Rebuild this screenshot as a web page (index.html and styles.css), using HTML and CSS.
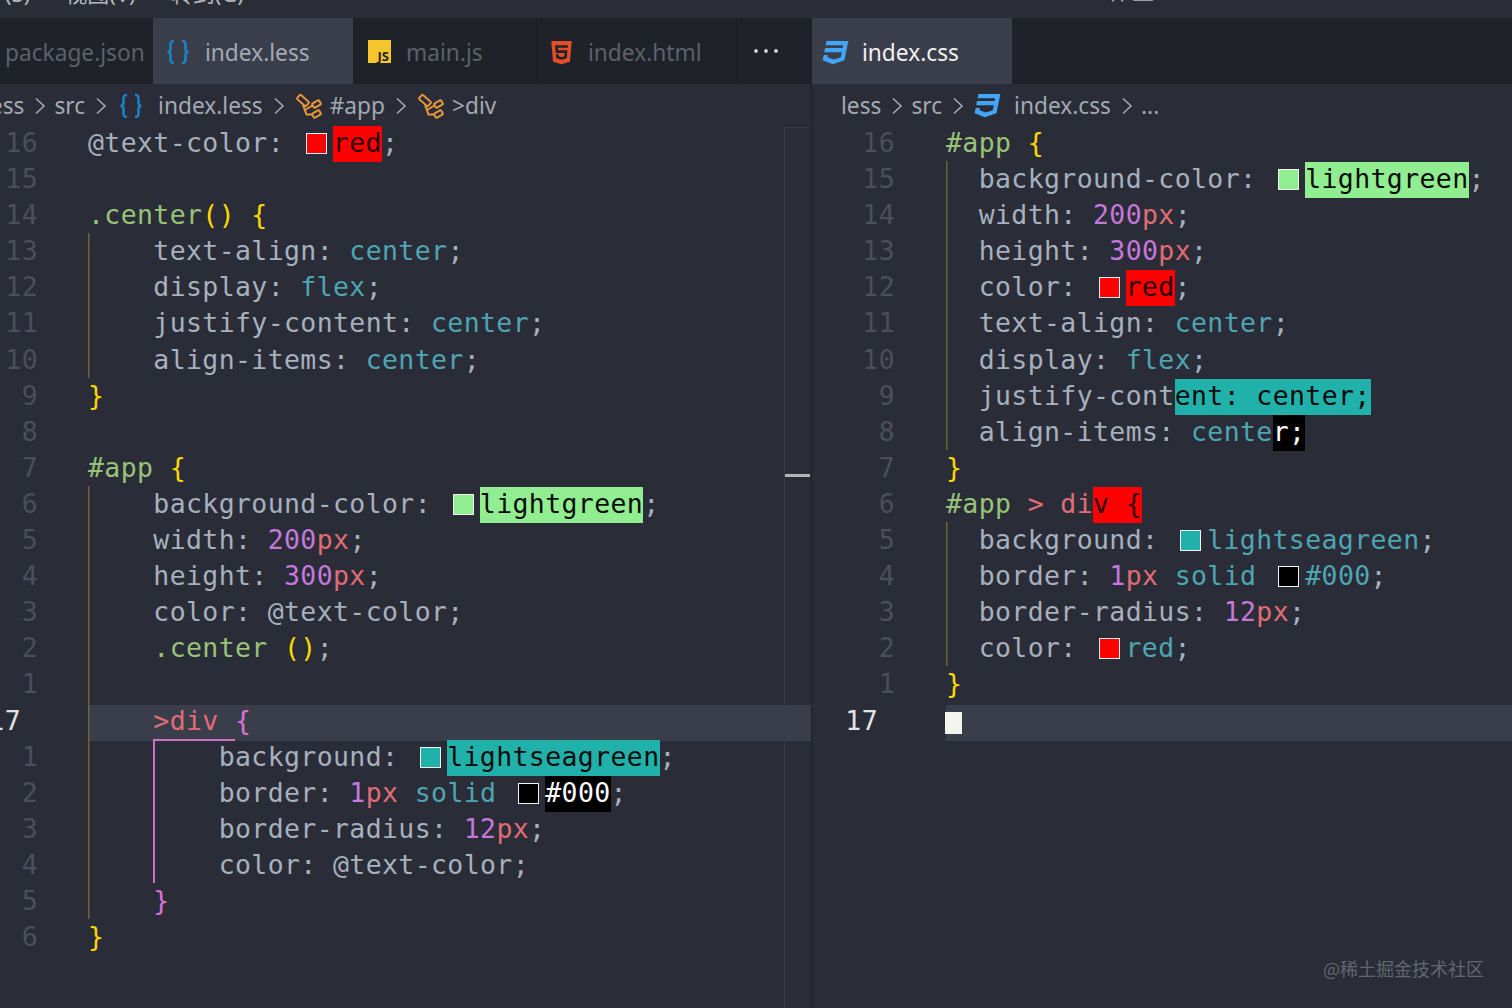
FILE: index.html
```html
<!DOCTYPE html>
<html>
<head>
    <title>index.less - index.css</title>
    <link rel="stylesheet" href="styles.css">
</head>
<body>

<svg class="defs" width="0" height="0">
    <symbol id="i-braces" viewBox="0 0 24 26">
        <path d="M8 2C4 2 4.5 5 4.5 8V10C4.5 12 3.5 13 1.5 13C3.5 13 4.5 14 4.5 16V18C4.5 21 4 24 8 24M16 2C20 2 19.5 5 19.5 8V10C19.5 12 20.5 13 22.5 13C20.5 13 19.5 14 19.5 16V18C19.5 21 20 24 16 24" fill="none" stroke="#1b80c4" stroke-width="2.6"/>
    </symbol>
    <symbol id="i-css" viewBox="0 0 24 24">
        <path d="M5,3L4.35,6.34H17.94L17.5,8.5H3.92L3.26,11.83H16.85L16.09,15.64L10.61,17.45L5.86,15.64L6.19,14H2.85L2.06,18L9.91,21L18.96,18L20.16,11.97L20.4,10.76L21.94,3H5Z" fill="#42a5f5"/>
    </symbol>
    <symbol id="i-html" viewBox="0 0 24 24">
        <path d="M12,17.56L16.07,16.43L16.62,10.33H9.38L9.2,8.3H16.8L17,6.31H7L7.56,12.32H14.45L14.22,14.9L12,15.5L9.78,14.9L9.64,13.24H7.64L7.93,16.43L12,17.56M4.07,3H19.93L18.5,19.2L12,21L5.5,19.2L4.07,3Z" fill="#e44d26"/>
    </symbol>
    <symbol id="i-node" viewBox="0 0 26 26">
        <g fill="none" stroke="#e8963c" stroke-width="2">
            <rect x="1" y="4.7" width="12" height="5.6" rx="1.2" transform="rotate(42 7 7.5)"/>
            <rect x="16.5" y="8.6" width="8" height="4.8" rx="1" transform="rotate(-30 20.5 11)"/>
            <rect x="16.5" y="18.6" width="8" height="4.8" rx="1" transform="rotate(-30 20.5 21)"/>
            <path d="M7 12L10.5 21.5H16.5M9 17L16.5 12.5"/>
        </g>
    </symbol>
    <symbol id="i-chev" viewBox="0 0 12 18">
        <path d="M2 1.5L10 9L2 16.5" fill="none" stroke="#a3a9b4" stroke-width="1.6"/>
    </symbol>
</svg>

<div class="titlebar">
    <span class="menu first">(S)</span>
    <span class="menu">视图(V)</span>
    <span class="menu">转到(G)</span>
    <span class="title">工作区</span>
</div>

<div class="panes">

    <!-- left editor: index.less -->
    <div class="pane pane-left">
        <div class="tabs">
            <div class="tab tab-package"><span>package.json</span></div>
            <div class="tab tab-active tab-less"><svg class="icon-braces"><use href="#i-braces"/></svg><span>index.less</span></div>
            <div class="tab tab-main"><span class="js-icon">JS</span><span>main.js</span></div>
            <div class="tab tab-html"><svg class="icon-html"><use href="#i-html"/></svg><span>index.html</span></div>
            <div class="tab tab-more">
                <svg width="24" height="6"><circle cx="2" cy="3" r="1.9"/><circle cx="12" cy="3" r="1.9"/><circle cx="22" cy="3" r="1.9"/></svg>
            </div>
        </div>
        <div class="crumbs crumbs-left">
            <span>less</span><svg class="chev"><use href="#i-chev"/></svg>
            <span>src</span><svg class="chev"><use href="#i-chev"/></svg>
            <svg class="icon-braces"><use href="#i-braces"/></svg><span>index.less</span><svg class="chev"><use href="#i-chev"/></svg>
            <svg class="icon-node"><use href="#i-node"/></svg><span>#app</span><svg class="chev"><use href="#i-chev"/></svg>
            <svg class="icon-node"><use href="#i-node"/></svg><span>&gt;div</span>
        </div>
        <div class="ruler"><div class="ruler-mark"></div></div>
        <div class="code-area">
            <div class="line"><span class="ln">16</span><span class="code">@text-color: <i class="swatch sw-red"></i><span class="hl hl-red">red</span>;</span></div>
            <div class="line"><span class="ln">15</span><span class="code"></span></div>
            <div class="line"><span class="ln">14</span><span class="code"><span class="sel">.center</span><span class="br">()</span> <span class="br">{</span></span></div>
            <div class="line"><span class="ln">13</span><span class="code g1">    text-align: <span class="val">center</span>;</span></div>
            <div class="line"><span class="ln">12</span><span class="code g1">    display: <span class="val">flex</span>;</span></div>
            <div class="line"><span class="ln">11</span><span class="code g1">    justify-content: <span class="val">center</span>;</span></div>
            <div class="line"><span class="ln">10</span><span class="code g1">    align-items: <span class="val">center</span>;</span></div>
            <div class="line"><span class="ln">9</span><span class="code"><span class="br">}</span></span></div>
            <div class="line"><span class="ln">8</span><span class="code"></span></div>
            <div class="line"><span class="ln">7</span><span class="code"><span class="sel">#app</span> <span class="br">{</span></span></div>
            <div class="line"><span class="ln">6</span><span class="code g1">    background-color: <i class="swatch sw-green"></i><span class="hl hl-green">lightgreen</span>;</span></div>
            <div class="line"><span class="ln">5</span><span class="code g1">    width: <span class="num">200</span><span class="unit">px</span>;</span></div>
            <div class="line"><span class="ln">4</span><span class="code g1">    height: <span class="num">300</span><span class="unit">px</span>;</span></div>
            <div class="line"><span class="ln">3</span><span class="code g1">    color: @text-color;</span></div>
            <div class="line"><span class="ln">2</span><span class="code g1">    <span class="sel">.center</span> <span class="br">()</span>;</span></div>
            <div class="line"><span class="ln">1</span><span class="code g1"></span></div>
            <div class="line line-cur"><span class="ln">17</span><span class="code g1">    <span class="bracket-top"><span class="unit">&gt;div</span> </span><span class="pk">{</span></span></div>
            <div class="line"><span class="ln">1</span><span class="code g12">        background: <i class="swatch sw-teal"></i><span class="hl hl-teal">lightseagreen</span>;</span></div>
            <div class="line"><span class="ln">2</span><span class="code g12">        border: <span class="num">1</span><span class="unit">px</span> <span class="val">solid</span> <i class="swatch sw-black"></i><span class="hl hl-black">#000</span>;</span></div>
            <div class="line"><span class="ln">3</span><span class="code g12">        border-radius: <span class="num">12</span><span class="unit">px</span>;</span></div>
            <div class="line"><span class="ln">4</span><span class="code g12">        color: @text-color;</span></div>
            <div class="line"><span class="ln">5</span><span class="code g1">    <span class="pk">}</span></span></div>
            <div class="line"><span class="ln">6</span><span class="code"><span class="br">}</span></span></div>
        </div>
    </div>

    <!-- right editor: compiled index.css -->
    <div class="pane pane-right">
        <div class="tabs">
            <div class="tab tab-active tab-css"><svg class="icon-css"><use href="#i-css"/></svg><span>index.css</span></div>
        </div>
        <div class="crumbs crumbs-right">
            <span>less</span><svg class="chev"><use href="#i-chev"/></svg>
            <span>src</span><svg class="chev"><use href="#i-chev"/></svg>
            <svg class="icon-css"><use href="#i-css"/></svg><span>index.css</span><svg class="chev"><use href="#i-chev"/></svg>
            <span>...</span>
        </div>
        <div class="code-area">
            <div class="line"><span class="ln">16</span><span class="code"><span class="sel">#app</span> <span class="br">{</span></span></div>
            <div class="line"><span class="ln">15</span><span class="code g1">  background-color: <i class="swatch sw-green"></i><span class="hl hl-green">lightgreen</span>;</span></div>
            <div class="line"><span class="ln">14</span><span class="code g1">  width: <span class="num">200</span><span class="unit">px</span>;</span></div>
            <div class="line"><span class="ln">13</span><span class="code g1">  height: <span class="num">300</span><span class="unit">px</span>;</span></div>
            <div class="line"><span class="ln">12</span><span class="code g1">  color: <i class="swatch sw-red"></i><span class="hl hl-red">red</span>;</span></div>
            <div class="line"><span class="ln">11</span><span class="code g1">  text-align: <span class="val">center</span>;</span></div>
            <div class="line"><span class="ln">10</span><span class="code g1">  display: <span class="val">flex</span>;</span></div>
            <div class="line"><span class="ln">9</span><span class="code g1">  justify-cont<span class="hl hl-teal">ent: center;</span></span></div>
            <div class="line"><span class="ln">8</span><span class="code g1">  align-items: <span class="val">cente</span><span class="hl hl-black">r;</span></span></div>
            <div class="line"><span class="ln">7</span><span class="code"><span class="br">}</span></span></div>
            <div class="line"><span class="ln">6</span><span class="code"><span class="sel">#app</span> <span class="unit">&gt; di</span><span class="hl hl-red">v {</span></span></div>
            <div class="line"><span class="ln">5</span><span class="code g1">  background: <i class="swatch sw-teal"></i><span class="val">lightseagreen</span>;</span></div>
            <div class="line"><span class="ln">4</span><span class="code g1">  border: <span class="num">1</span><span class="unit">px</span> <span class="val">solid</span> <i class="swatch sw-black"></i><span class="val">#000</span>;</span></div>
            <div class="line"><span class="ln">3</span><span class="code g1">  border-radius: <span class="num">12</span><span class="unit">px</span>;</span></div>
            <div class="line"><span class="ln">2</span><span class="code g1">  color: <i class="swatch sw-red"></i><span class="val">red</span>;</span></div>
            <div class="line"><span class="ln">1</span><span class="code"><span class="br">}</span></span></div>
            <div class="line line-cur"><span class="ln">17</span><span class="code"><i class="cursor"></i></span></div>
        </div>
    </div>

</div>

<div class="watermark">@稀土掘金技术社区</div>

</body>
</html>
```

FILE: styles.css
```css
html, body {
    margin: 0;
    padding: 0;
    height: 1008px;
    overflow: hidden;
    background-color: #2a2d37;
}

body {
    position: relative;
    font-family: "Noto Sans", "Noto Sans CJK SC", sans-serif;
    color: #a3a9b4;
}

.defs {
    display: block;
}

/* top bar, only the bottom of its text is in the picture */
.titlebar {
    display: flex;
    height: 18px;
    overflow: hidden;
    background-color: #2a2d36;
    font-size: 22px;
    line-height: 22px;
    color: #b4b8bf;
}

.menu {
    margin-top: -18px;
    margin-right: 35px;
}

.menu.first {
    margin-left: 5px;
}

.title {
    margin-top: -21px;
    margin-left: 806px;
    font-size: 23px;
    line-height: 23px;
}

.panes {
    display: flex;
    height: 990px;
}

.pane {
    position: relative;
    overflow: hidden;
}

.pane-left {
    width: 811px;
    flex: none;
    border-right: 1px solid #1d2026;
}

.pane-right {
    flex: 1;
}

/* tabs */
.tabs {
    display: flex;
    height: 66px;
    background-color: #1f2228;
}

.tab {
    display: flex;
    align-items: center;
    flex: none;
    gap: 15px;
    box-sizing: border-box;
    padding-top: 2px;
    font-size: 22.7px;
    color: #5c616b;
    border-right: 1px solid #1a1c21;
}

.tab-active {
    background-color: #3a3e4a;
    color: #a3a9b4;
    border-right: none;
}

.tab-package {
    width: 153px;
    padding-left: 5px;
    border-right: none;
}

.tab-less {
    width: 200px;
    padding-left: 13px;
}

.tab-main {
    width: 184px;
    padding-left: 15px;
}

.tab-html {
    width: 200px;
    padding-left: 9px;
    gap: 11px;
}

.tab-more {
    width: 74px;
    padding-left: 17px;
    padding-top: 0;
    border-right: none;
}

.tab-more circle {
    fill: #d4d6da;
}

.tab-css {
    width: 200px;
    padding-left: 8px;
    gap: 11px;
    color: #f0f1f3;
}

.icon-braces {
    width: 24px;
    height: 26px;
    flex: none;
}

.icon-html {
    width: 31px;
    height: 31px;
    flex: none;
}

.icon-css {
    width: 31px;
    height: 31px;
    flex: none;
}

.icon-node {
    width: 26px;
    height: 26px;
    flex: none;
}

.js-icon {
    display: flex;
    align-items: flex-end;
    justify-content: flex-end;
    width: 23px;
    height: 23px;
    box-sizing: border-box;
    margin-top: -2px;
    padding: 0 2px 0 0;
    background-color: #f5c52b;
    color: #26231a;
    font-size: 13px;
    line-height: 14px;
    font-weight: 700;
}

/* breadcrumbs */
.crumbs {
    display: flex;
    align-items: center;
    box-sizing: border-box;
    height: 41px;
    padding-top: 2px;
    white-space: nowrap;
    font-size: 22.7px;
    color: #a3a9b4;
}

.crumbs-left {
    margin-left: -16px;
}

.crumbs-right {
    margin-left: 29px;
}

.chev {
    flex: none;
    width: 12px;
    height: 18px;
    margin: 0 8px 0 10px;
}

.crumbs .icon-braces {
    margin: 0 15px 0 4px;
}

.crumbs .icon-node {
    margin: 0 8px 0 3px;
}

.crumbs .icon-css {
    margin: 0 11px 0 0;
}

/* code */
.code-area {
    font-family: "DejaVu Sans Mono", monospace;
    font-size: 26.5px;
    letter-spacing: 0.38px;
    color: #a7b0be;
}

.line {
    display: flex;
    height: 36.1px;
    line-height: 36.1px;
}

.ln {
    display: flex;
    justify-content: flex-end;
    flex: none;
    box-sizing: border-box;
    color: #4a4f5b;
}

.pane-left .ln {
    width: 88px;
    padding-right: 50px;
}

.pane-right .ln {
    width: 134px;
    padding-right: 51px;
}

.line-cur .ln {
    color: #e2e3e5;
}

.pane-left .line-cur .ln {
    padding-right: 67px;
}

.pane-right .line-cur .ln {
    padding-right: 68px;
}

.code {
    flex: 1;
    white-space: pre;
    background-repeat: no-repeat;
}

/* the band sits 2px lower than the text line */
.line-cur .code {
    background-image: linear-gradient(transparent 2px, #3a3e4a 2px);
    box-shadow: 0 2px 0 #3a3e4a;
}

.g1 {
    background-image: linear-gradient(#6e6433, #6e6433);
    background-size: 1.5px 100%;
    background-position: 0 0;
}

.line-cur .code.g1 {
    background-image: linear-gradient(#6e6433, #6e6433), linear-gradient(transparent 2px, #3a3e4a 2px);
    background-size: 1.5px 100%, 100% 100%;
}

.g12 {
    background-image: linear-gradient(#6e6433, #6e6433), linear-gradient(#d070c8, #d070c8);
    background-size: 1.5px 100%, 2px 100%;
    background-position: 0 0, 65px 0;
}

.bracket-top {
    display: inline-block;
    height: 38.1px;
    box-sizing: border-box;
    border-bottom: 2px solid #d070c8;
}

.sel { color: #98c379; }
.val { color: #4ea5b3; }
.num { color: #c678dd; }
.unit { color: #e06c75; }
.br { color: #ffd700; }
.pk { color: #da70d6; }

/* shorter line-height plus bottom padding puts the box 1.5px below the text line */
.hl {
    display: inline-block;
    line-height: 33px;
    padding-bottom: 3px;
    color: #0a0a0a;
}

.hl-red { background-color: #ff0000; color: #2a0000; }
.hl-green { background-color: #90ee90; }
.hl-teal { background-color: #20b2aa; }
.hl-black { background-color: #000; color: #fff; }

.swatch {
    display: inline-block;
    box-sizing: border-box;
    width: 21px;
    height: 21px;
    margin: 0 6px 0 5.5px;
    border: 1.5px solid #f2f2f2;
    vertical-align: -2px;
}

.sw-red { background-color: #ff0000; }
.sw-green { background-color: #90ee90; }
.sw-teal { background-color: #20b2aa; }
.sw-black { background-color: #000; }

.cursor {
    display: inline-block;
    width: 17px;
    height: 22px;
    margin-left: -1px;
    background-color: #f4f4ee;
    vertical-align: -4px;
}

/* overview ruler at the right of the left editor */
.ruler {
    position: absolute;
    top: 109px;
    right: 0;
    bottom: 0;
    width: 26px;
    border-top: 1px solid #363a44;
    border-left: 1px solid #363a44;
}

.ruler-mark {
    position: absolute;
    top: 346px;
    left: 0;
    right: 1px;
    height: 3px;
    background-color: #b4b5b6;
}

.watermark {
    position: absolute;
    top: 956px;
    right: 28px;
    font-family: "Noto Sans CJK SC", sans-serif;
    font-size: 18px;
    line-height: 24px;
    color: #63666e;
}
```
